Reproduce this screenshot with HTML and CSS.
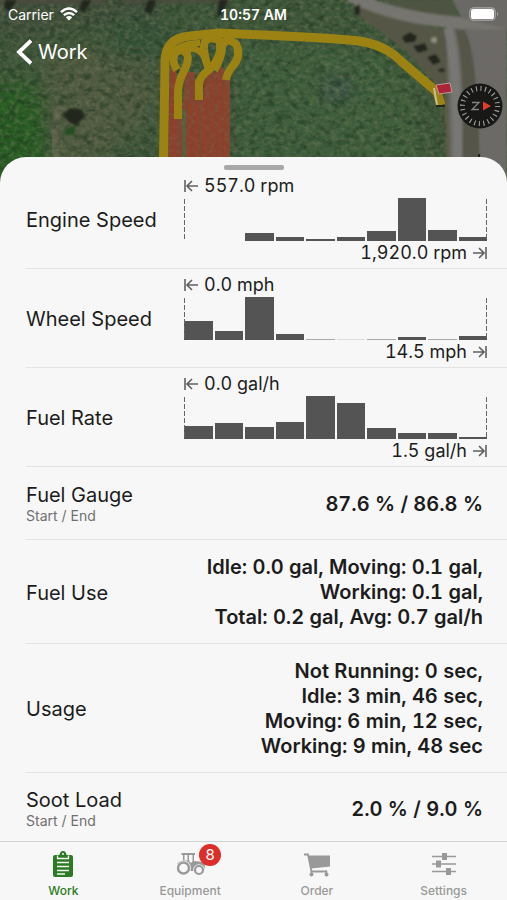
FILE: index.html
```html
<!DOCTYPE html>
<html lang="en">
<head>
<meta charset="utf-8">
<meta name="viewport" content="width=device-width, initial-scale=1">
<title>Work</title>
<link rel="stylesheet" href="styles.css">
</head>
<body>
<div class="app">
  <header class="hero">
    <svg class="map" viewBox="0 0 507 190" preserveAspectRatio="xMidYMin slice" aria-hidden="true">
      <defs>
        <filter id="grain" x="0" y="0" width="100%" height="100%" color-interpolation-filters="sRGB">
          <feTurbulence type="fractalNoise" baseFrequency="0.2 0.24" numOctaves="3" seed="7"/>
          <feColorMatrix values="0 0 0 0 0.5  0 0 0 0 0.5  0 0 0 0 0.38  2.6 0 0 0 -1.1"/>
        </filter>
        <filter id="shade" x="0" y="0" width="100%" height="100%" color-interpolation-filters="sRGB">
          <feTurbulence type="fractalNoise" baseFrequency="0.12 0.15" numOctaves="3" seed="21"/>
          <feColorMatrix values="0 0 0 0 0.1  0 0 0 0 0.2  0 0 0 0 0.12  0 2.6 0 0 -1.1"/>
        </filter>
        <filter id="soft" x="-20%" y="-20%" width="140%" height="140%"><feGaussianBlur stdDeviation="9"/></filter>
        <filter id="edge" x="-20%" y="-20%" width="140%" height="140%"><feGaussianBlur stdDeviation="1"/></filter>
      </defs>
      <rect width="507" height="190" fill="#3e5639"/>
      <g filter="url(#soft)">
        <path d="M-20 85H40L50 190H-20Z" fill="#265c21"/>
        <path d="M40 55L150 45L155 110L60 190L52 110Z" fill="#505a40"/>
        <path d="M-10 -10H160V22L0 40Z" fill="#40503a"/>
        <path d="M110 20H170V60H110Z" fill="#345238"/>
        <path d="M240 40L400 50L430 190H230Z" fill="#3d5d3a"/>
        <path d="M320 80L350 76L350 98L325 100Z" fill="#3b5048"/>
      </g>
      <g fill="none" stroke="#65764d" stroke-width="2" opacity=".4" filter="url(#edge)">
        <path d="M300 55Q400 75 425 190M300 75Q380 95 405 190M300 95Q365 110 385 190M310 120Q350 135 360 190M340 50Q425 80 440 190"/>
      </g>
      <path d="M66 190Q45 130 62 105" fill="none" stroke="#6b6a54" stroke-width="7" opacity=".7" filter="url(#edge)"/>
      <rect width="507" height="190" filter="url(#shade)" opacity=".55"/>
      <rect width="507" height="190" filter="url(#grain)" opacity=".4"/>
      <g filter="url(#edge)">
        <path d="M353 7L380 8Q420 28 449 30V88L436 84L405 50L358 15Z" fill="#565747"/>
        <path d="M380 0H450L460 17Q425 18 380 0Z" fill="#4d5442"/>
        <path d="M446 27H507V190H451Z" fill="#6c6a66"/>
        <path d="M455 29L465 30Q479 55 480 190H461Q467 70 455 29Z" fill="#565448"/>
        <path d="M350 -4Q415 27 507 23" fill="none" stroke="#77756f" stroke-width="12"/>
        <path d="M448 28Q458 65 458 190" fill="none" stroke="#777773" stroke-width="9"/>
        <path d="M450 -4H511V30L462 18Z" fill="#6b6965"/>
        <path d="M447 92L452 190H448L444 95Z" fill="#605c48"/>
        <path d="M0 0H105V4H0ZM120 0H230V3H120Z" fill="#4b4c3d"/>
        <g fill="#20261f">
          <path d="M5 0H17L10 11L4 8ZM82 0H92L84 13L79 9ZM148 0H156L151 14L144 11ZM219 0H228L223 13L217 17Z"/>
          <path d="M63 115L70 108L82 110L85 117L80 121L77 126L69 122Z"/>
          <path d="M402 37L410 32L417 36L415 42L405 43ZM413 46L425 43L428 50L418 53ZM427 57L436 54L441 62L433 65ZM438 69L444 68L445 72H439ZM354 8L360 4L360 14L356 16Z"/>
        </g>
        <path d="M65 130L76 125L74 134L66 136Z" fill="#254d20"/>
        <circle cx="434" cy="40" r="3" fill="#89907a"/>
      </g>
      <path d="M170 69L176 68V119H182L185 72H195V100H203L208 67L215 73L220 64L230 80V190H167Z" fill="#82442f"/>
      <path d="M174 72V190M190 105V190M196 105V190M205 80V190M212 80V190M219 75V190M225 84V190" fill="none" stroke="#9c3a26" stroke-width="3" opacity=".6"/>
      <path d="M184 110V190" fill="none" stroke="#4b663e" stroke-width="3"/>
      <rect x="166" y="64" width="64" height="126" filter="url(#grain)" opacity=".2"/>
      <g fill="none" stroke="#9c8213" stroke-width="9" stroke-linejoin="round">
        <path d="M163 190L165 65Q164 38 190 36L220 33L283 36Q350 39 365 42Q388 47 402 62L437 92L441 105"/>
        <path d="M178 119V92Q179 80 183 73Q190 60 187 54Q181 47 175 53Q171 60 177 70" stroke-width="8"/>
        <path d="M199 100V82Q202 74 209 70Q224 55 219 40Q203 34 204 49Q205 60 209 69" stroke-width="8"/>
        <path d="M226 80Q227 73 232 67Q242 56 236 44Q225 36 222 47Q222 58 214 70" stroke-width="8"/>
        <path d="M168 59Q176 43 200 43M184 51Q197 44 205 58" stroke-width="6"/>
      </g>
      <path d="M434 88L437 105" stroke="#c7bd91" stroke-width="2"/>
      <path d="M436 106H445" stroke="#242719" stroke-width="2"/>
      <path d="M436 85L450 83L452 92L439 94Z" fill="#ad2338" stroke="#ba9c98" stroke-width="1"/>
      <rect x="478" y="154" width="2" height="3" fill="#222"/>
    </svg>

    <div class="status">
      <span class="carrier">Carrier
        <svg class="wifi" viewBox="0 0 18 14" aria-hidden="true">
          <g fill="none" stroke="#fff" stroke-width="2.4">
            <path d="M1 5.2Q9 -2 17 5.2M3.8 8.2Q9 3.6 14.2 8.2"/>
          </g>
          <path d="M5.8 10.2Q9 7.7 12.2 10.2L9 13.6Z" fill="#fff"/>
        </svg>
      </span>
      <time class="clock">10:57 AM</time>
      <svg class="battery" viewBox="0 0 30 14" aria-hidden="true">
        <rect x=".8" y=".8" width="25.4" height="12.4" rx="4" fill="none" stroke="#a9aaa5" stroke-width="1.2"/>
        <rect x="2" y="2" width="23" height="10" rx="2.6" fill="#fff"/>
        <path d="M28 5Q30 7 28 9Z" fill="#a9aaa5"/>
      </svg>
    </div>

    <div class="toolbar">
      <a class="back" href="#work">
        <svg viewBox="0 0 18 28" aria-hidden="true"><path d="M15 2.6L3 14L15 25.4" fill="none" stroke="#fff" stroke-width="3.8"/></svg>
        Work
      </a>
      <button class="compass" type="button" aria-label="Compass">
        <svg viewBox="0 0 46 46" aria-hidden="true">
          <circle cx="23" cy="23" r="22.5" fill="#181817"/>
          <circle cx="23" cy="23" r="17.5" fill="none" stroke="#aaa9a5" stroke-width="5" stroke-dasharray="1 3.58"/>
          <path d="M15 26.500V19.500L22 26.500V19.500" transform="rotate(90 18.500 23)" fill="none" stroke="#858585" stroke-width="1.3"/>
          <path d="M26 18.500L34 23L26 27.500Z" fill="#e23a2b"/>
        </svg>
      </button>
    </div>
  </header>

  <main class="sheet">
    <div class="grip"></div>
    <dl class="stats">
      <div class="row chart-row">
        <dt>Engine Speed</dt>
        <dd class="histogram">
          <span class="limit low"><svg viewBox="0 0 14 14" aria-hidden="true"><path d="M1 1V13M14 7H3M8 2L3 7L8 12"/></svg>557.0 rpm</span>
          <div class="bars">
            <i style="height:0%"></i><i style="height:0%"></i><i style="height:19%"></i><i style="height:9%"></i><i style="height:4%"></i><i style="height:10%"></i><i style="height:23%"></i><i style="height:100%"></i><i style="height:26%"></i><i style="height:10%"></i>
          </div>
          <span class="limit high">1,920.0 rpm<svg viewBox="0 0 14 14" aria-hidden="true"><path d="M13 1V13M0 7H11M6 2L11 7L6 12"/></svg></span>
        </dd>
      </div>
      <div class="row chart-row">
        <dt>Wheel Speed</dt>
        <dd class="histogram">
          <span class="limit low"><svg viewBox="0 0 14 14" aria-hidden="true"><path d="M1 1V13M14 7H3M8 2L3 7L8 12"/></svg>0.0 mph</span>
          <div class="bars">
            <i style="height:45%"></i><i style="height:20%"></i><i style="height:100%"></i><i style="height:14%"></i><i class="trace" style="height:3%"></i><i class="trace faint" style="height:2%"></i><i class="trace" style="height:3%"></i><i style="height:6%"></i><i class="trace" style="height:3%"></i><i style="height:9%"></i>
          </div>
          <span class="limit high">14.5 mph<svg viewBox="0 0 14 14" aria-hidden="true"><path d="M13 1V13M0 7H11M6 2L11 7L6 12"/></svg></span>
        </dd>
      </div>
      <div class="row chart-row">
        <dt>Fuel Rate</dt>
        <dd class="histogram">
          <span class="limit low"><svg viewBox="0 0 14 14" aria-hidden="true"><path d="M1 1V13M14 7H3M8 2L3 7L8 12"/></svg>0.0 gal/h</span>
          <div class="bars">
            <i style="height:31%"></i><i style="height:37%"></i><i style="height:29%"></i><i style="height:40%"></i><i style="height:100%"></i><i style="height:83%"></i><i style="height:26%"></i><i style="height:14%"></i><i style="height:14%"></i><i style="height:5%"></i>
          </div>
          <span class="limit high">1.5 gal/h<svg viewBox="0 0 14 14" aria-hidden="true"><path d="M13 1V13M0 7H11M6 2L11 7L6 12"/></svg></span>
        </dd>
      </div>
      <div class="row">
        <dt>Fuel Gauge<small>Start / End</small></dt>
        <dd class="value">87.6 % / 86.8 %</dd>
      </div>
      <div class="row">
        <dt>Fuel Use</dt>
        <dd class="value">Idle: 0.0 gal, Moving: 0.1 gal,<br>Working: 0.1 gal,<br>Total: 0.2 gal, Avg: 0.7 gal/h</dd>
      </div>
      <div class="row">
        <dt>Usage</dt>
        <dd class="value">Not Running: 0 sec,<br>Idle: 3 min, 46 sec,<br>Moving: 6 min, 12 sec,<br>Working: 9 min, 48 sec</dd>
      </div>
      <div class="row">
        <dt>Soot Load<small>Start / End</small></dt>
        <dd class="value">2.0 % / 9.0 %</dd>
      </div>
    </dl>
  </main>

  <nav class="tabs">
    <a class="tab active" href="#work" aria-current="page">
      <svg viewBox="0 0 32 28" aria-hidden="true">
        <path d="M8 4H12.500Q13 0 16 0Q19 0 19.500 4H24Q26 4 26 6V24Q26 26 24 26H8Q6 26 6 24V6Q6 4 8 4Z" fill="currentColor"/>
        <path d="M10.500 4.500V7.500H21.500V4.500M10 11.500H22M10 15.500H22M10 19.500H22M10 23H18" fill="none" stroke="#f7f7f7" stroke-width="1.300"/>
        <circle cx="16" cy="3" r="1" fill="#f7f7f7"/>
      </svg>
      Work
    </a>
    <a class="tab" href="#equipment">
      <span class="icon-wrap">
        <svg viewBox="0 0 32 28" aria-hidden="true">
          <path d="M7.500 2H21V4H20V10L29 11Q31 12 31 18L28 20H15L3 13Q4 10 9 9.500V4H7.500Z" fill="currentColor"/>
          <path d="M10.500 4H13.500V9.500H10.500ZM15 4H18.500V10.500L17 12L15 10Z" fill="#f7f7f7"/>
          <circle cx="9.500" cy="17" r="7.500" fill="#f7f7f7"/>
          <circle cx="9.500" cy="17" r="5.500" fill="none" stroke="currentColor" stroke-width="2.400"/>
          <circle cx="25" cy="19" r="5.800" fill="#f7f7f7"/>
          <circle cx="25" cy="19" r="4" fill="none" stroke="currentColor" stroke-width="2.200"/>
        </svg>
        <span class="badge">8</span>
      </span>
      Equipment
    </a>
    <a class="tab" href="#order">
      <svg viewBox="0 0 32 28" aria-hidden="true">
        <path d="M3 3.500H7L10.500 20.500H26" fill="none" stroke="currentColor" stroke-width="1.800"/>
        <path d="M7.500 4.500H29V15.500L10 17.500Z" fill="currentColor"/>
        <circle cx="10.500" cy="23.500" r="2" fill="currentColor"/><circle cx="25.500" cy="23.500" r="2" fill="currentColor"/>
        <path d="M10.500 19.500V23M25.500 19.500V23" stroke="currentColor" stroke-width="1.500"/>
      </svg>
      Order
    </a>
    <a class="tab" href="#settings">
      <svg viewBox="0 0 32 28" aria-hidden="true">
        <path d="M4 5.500H28M4 13H28M4 20.500H28" stroke="currentColor" stroke-width="1.600"/>
        <path d="M14 2H19V9H14ZM8 9.500H13V16.500H8ZM18 17H23V24H18Z" fill="currentColor"/>
      </svg>
      Settings
    </a>
  </nav>
</div>
</body>
</html>
```
FILE: styles.css
```css
* {
  box-sizing: border-box;
}

body {
  margin: 0;
  font-family: Inter, "Liberation Sans", sans-serif;
  color: #1c1c1c;
  background: #f7f7f7;
}

a {
  color: inherit;
  text-decoration: none;
}

svg {
  display: block;
  flex: none;
}

.app {
  display: flex;
  flex-direction: column;
  min-height: 100vh;
}

/* Map header */
.hero {
  position: relative;
  padding-bottom: 54px;
  color: #fff;
}

.map {
  position: absolute;
  inset: 0;
  width: 100%;
  height: 100%;
}

.status {
  position: relative;
  display: grid;
  grid-template-columns: 1fr auto 1fr;
  align-items: center;
  height: 28px;
  padding: 0 8px;
  font-size: 14px;
}

.carrier {
  display: flex;
  align-items: center;
  gap: 6px;
}

.wifi {
  width: 18px;
  height: 14px;
}

.clock {
  font-weight: 600;
  font-variant-numeric: tabular-nums;
}

.battery {
  width: 30px;
  height: 14px;
  justify-self: end;
}

.toolbar {
  position: relative;
  display: flex;
  justify-content: space-between;
  align-items: flex-end;
  height: 101px;
  padding: 0 4px 0 16px;
}

.back {
  display: flex;
  align-items: center;
  align-self: flex-start;
  gap: 4px;
  height: 48px;
  font-size: 20px;
}

.back svg {
  width: 18px;
  height: 28px;
}

.compass {
  width: 46px;
  height: 46px;
  padding: 0;
  border: 0;
  background: none;
}

/* Sheet over the map */
.sheet {
  position: relative;
  flex: 1;
  margin-top: -26px;
  padding-top: 8px;
  border-radius: 26px 26px 0 0;
  background: #f7f7f7;
}

.grip {
  width: 60px;
  height: 5px;
  margin: 0 auto;
  border-radius: 2px;
  background: #a8a8a8;
}

.stats {
  margin: 0;
  padding-left: 26px;
}

.row {
  display: grid;
  grid-template-columns: 158px 1fr;
  align-items: center;
  min-height: 73px;
  padding: 15px 24px 13px 0;
  border-bottom: 1px solid #e3e3e3;
}

.row:last-child {
  min-height: 68px;
  padding-top: 12px;
  padding-bottom: 8px;
  border-bottom: 0;
}

.row.chart-row {
  padding: 6px 20px 5px 0;
}

dt {
  font-size: 20px;
  line-height: 24px;
}

dt small {
  display: block;
  font-size: 14px;
  line-height: 18px;
  color: #707070;
}

dd {
  margin: 0;
  font-variant-numeric: tabular-nums;
}

.value {
  font-size: 20px;
  font-weight: 600;
  line-height: 25px;
  text-align: right;
  white-space: nowrap;
  justify-self: end;
}

.histogram {
  display: flex;
  flex-direction: column;
  gap: 2px;
}

.limit {
  display: flex;
  align-items: center;
  gap: 6px;
  font-size: 18px;
  line-height: 20px;
}

.limit svg {
  width: 14px;
  height: 14px;
  fill: none;
  stroke: #606060;
  stroke-width: 1.6;
}

.high {
  justify-content: flex-end;
}

.bars {
  position: relative;
  display: flex;
  align-items: flex-end;
  gap: 2px;
  height: 43px;
}

.bars::before,
.bars::after {
  content: "";
  position: absolute;
  top: 1px;
  bottom: 1px;
  width: 1px;
  background: repeating-linear-gradient(#666 0 5px, transparent 5px 7px);
}

.bars::before {
  left: 0;
}

.bars::after {
  right: 0;
}

.bars i {
  flex: 1;
  background: #545454;
}

.bars .trace {
  background: #aaa;
}

.bars .faint {
  background: #ddd;
}

/* Bottom tabs */
.tabs {
  display: grid;
  grid-template-columns: repeat(4, 1fr);
  height: 60px;
  border-top: 1px solid #d2d2d2;
}

.tab {
  display: flex;
  flex-direction: column;
  align-items: center;
  gap: 3px;
  padding-top: 9px;
  font-size: 12px;
  font-weight: 500;
  line-height: 18px;
  color: #999;
}

.tab svg {
  width: 32px;
  height: 28px;
}

.active {
  color: #2c7a24;
}

.icon-wrap {
  position: relative;
}

.badge {
  position: absolute;
  top: -7px;
  left: 25px;
  width: 22px;
  height: 22px;
  border-radius: 50%;
  background: #dc2f2b;
  color: #fff;
  font-size: 15px;
  font-weight: 400;
  line-height: 22px;
  text-align: center;
}
```
